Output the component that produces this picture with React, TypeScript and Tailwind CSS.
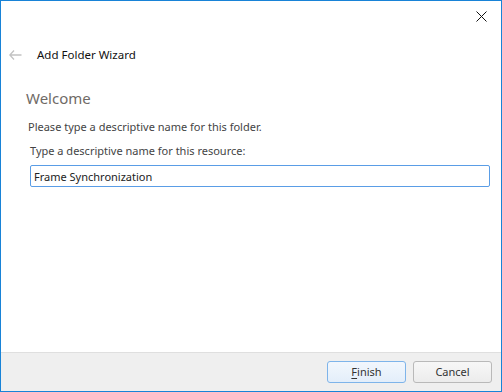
import { useState } from 'react';

/* ─── Small back arrow (disabled) ─── */
function BackArrow() {
  return (
    <svg width="13" height="10" viewBox="0 0 13 10" className="shrink-0">
      <path d="M5 0.5 L0.8 5 L5 9.5 M0.8 5 H12.5" fill="none" stroke="#c2c2c2" strokeWidth="1.3" />
    </svg>
  );
}

function CloseIcon() {
  return (
    <svg width="11" height="11" viewBox="0 0 11 11">
      <path d="M0.5 0.5 L10.5 10.5 M10.5 0.5 L0.5 10.5" fill="none" stroke="#111" strokeWidth="1" />
    </svg>
  );
}

export default function App() {
  const [name, setName] = useState('Frame Synchronization');

  return (
    <div
      className="w-[502px] h-[392px] border border-[#1883d7] bg-white flex flex-col text-[#222]"
      style={{ fontFamily: '"Noto Sans", "Open Sans", sans-serif' }}
    >
      {/* ── Title bar ── */}
      <div className="h-[30px] flex justify-end items-center pr-[14px] shrink-0">
        <CloseIcon />
      </div>

      {/* ── Header with back arrow ── */}
      <div className="flex items-center h-[20px] mt-[14px] pl-[8px] gap-[15px]">
        <BackArrow />
        <span className="text-[11.5px] text-[#111]">Add Folder Wizard</span>
      </div>

      {/* ── Page body ── */}
      <div className="flex-1 flex flex-col pl-[25px] pr-[11px]">
        <h1 className="text-[15px] text-[#6f6a66] mt-[23px] leading-[20px]">Welcome</h1>
        <p className="text-[11px] text-[#444] mt-[12px] ml-[2px] leading-[14px]">
          Please type a descriptive name for this folder.
        </p>
        <label className="text-[11px] text-[#444] mt-[10px] ml-[4px] leading-[14px]">
          Type a descriptive name for this resource:
        </label>
        <input
          value={name}
          onChange={(e) => setName(e.target.value)}
          className="mt-[7px] ml-[4px] h-[22px] border border-[#5a9de6] rounded-[2px] px-[3px] text-[11px] text-[#222] outline-none"
          style={{ fontFamily: 'inherit' }}
        />
      </div>

      {/* ── Footer buttons ── */}
      <div className="h-[39px] border-t border-[#dfdfdf] bg-[#efefef] flex justify-end items-center gap-[7px] pr-[9px] shrink-0">
        <button className="w-[79px] h-[22px] rounded-[3px] border border-[#7eb4ea] bg-gradient-to-b from-[#f2f7fd] to-[#e3eefa] text-[11px] text-[#333]">
          <span className="underline underline-offset-2">F</span>inish
        </button>
        <button className="w-[79px] h-[22px] rounded-[3px] border border-[#b9b9b9] bg-gradient-to-b from-[#f7f7f7] to-[#ececec] text-[11px] text-[#333]">
          Cancel
        </button>
      </div>
    </div>
  );
}
